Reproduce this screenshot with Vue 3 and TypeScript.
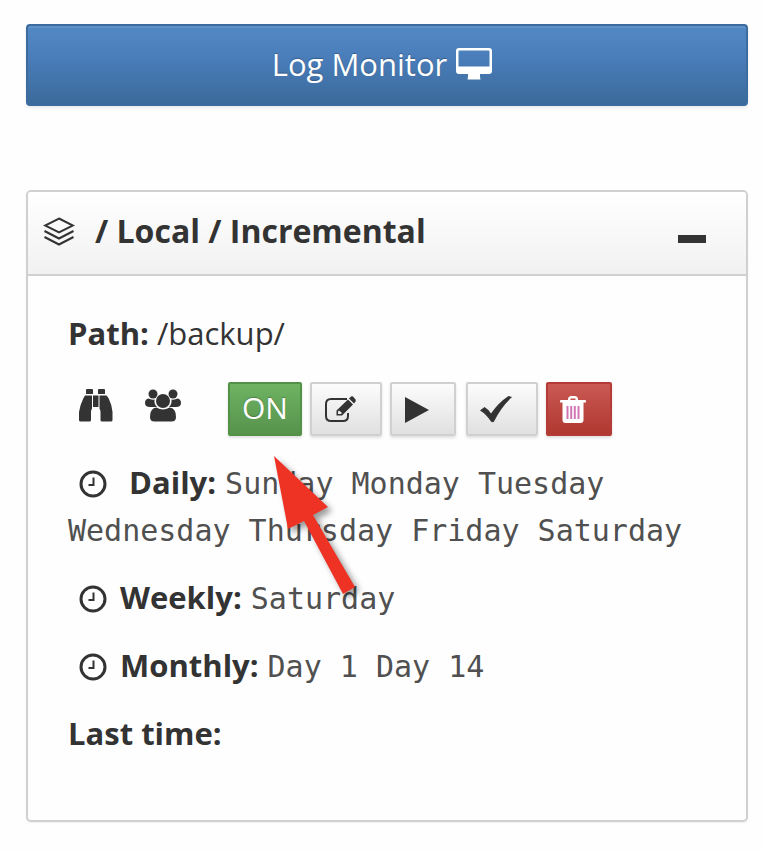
<script setup lang="ts">
interface Schedule {
  label: string
  entries: string[]
  pointed?: boolean
}

const schedules: Schedule[] = [
  {
    label: 'Daily:',
    entries: ['Sunday', 'Monday', 'Tuesday', 'Wednesday', 'Thursday', 'Friday', 'Saturday'],
    pointed: true,
  },
  { label: 'Weekly:', entries: ['Saturday'] },
  { label: 'Monthly:', entries: ['Day 1', 'Day 14'] },
]
</script>

<template>
  <main class="page">
    <button type="button" class="log-button">
      <span>Log Monitor</span>
      <svg class="monitor" viewBox="0 0 36 32" aria-hidden="true">
        <path fill-rule="evenodd" d="M3 0H33Q36 0 36 3V23Q36 26 33 26H24V28Q24 29 24.500 31.500H11.500Q12 29 12 28V26H3Q0 26 0 23V3Q0 0 3 0ZM3.500 2.500Q2.500 2.500 2.500 3.500V18.500H33.500V3.500Q33.500 2.500 32.500 2.500Z" />
      </svg>
    </button>

    <section class="card">
      <header class="card-head">
        <svg class="layers" viewBox="0 0 32 30" aria-hidden="true">
          <path d="M16 1.500 30 8.500 16 15.500 2 8.500Z" />
          <path d="M1.500 14 16 21.500 30.500 14M1.500 20 16 27.500 30.500 20" />
        </svg>
        <h2>/ Local / Incremental</h2>
        <button type="button" class="collapse" aria-label="Collapse">
          <span></span>
        </button>
      </header>

      <div class="card-body">
        <p><strong>Path:</strong> /backup/</p>

        <div class="actions">
          <a href="#" class="glyph" aria-label="Browse">
            <svg class="binoculars" viewBox="0 0 34 33" aria-hidden="true">
              <path d="M8 0H13Q14 0 14 1V5H7V1Q7 0 8 0ZM20 0H25Q26 0 26 1V5H19V1Q19 0 20 0ZM6 6.500H13V19.500Q12 21 12 23V31Q12 32.500 10.500 32.500H1.500Q0 32.500 0 31V23Q1 16 4.500 9ZM14 6.500H19.500V18H14ZM20.500 6.500H27.500L29.500 9Q33 16 33.500 23V31Q33.500 32.500 32 32.500H23Q21.500 32.500 21.500 31V23Q21.500 21 20.500 19.500Z" />
            </svg>
          </a>
          <a href="#" class="glyph users-link" aria-label="Users">
            <svg class="users" viewBox="0 0 36 33" aria-hidden="true">
              <circle cx="8" cy="5" r="4.500" />
              <circle cx="28" cy="5" r="4.500" />
              <path d="M3.500 9.500Q6 11 9.500 10.500Q9 15 12 18H5Q0 18 0 14Q0 10 3.500 9.500ZM32.500 9.500Q30 11 26.500 10.500Q27 15 24 18H31Q36 18 36 14Q36 10 32.500 9.500Z" />
              <circle cx="18" cy="12" r="7" />
              <path d="M11.500 18.500Q18 22.500 24.500 18.500Q31 19 31 28Q31 32.500 26.500 32.500H9.500Q5 32.500 5 28Q5 19 11.500 18.500Z" />
            </svg>
          </a>

          <div class="buttons">
            <button type="button" class="btn on">ON</button>
            <button type="button" class="btn wide" aria-label="Edit">
              <svg class="edit" viewBox="0 0 32 28" aria-hidden="true">
                <path class="frame" d="M23 3H7Q2 3 2 8V20Q2 25 7 25H19Q24 25 24 20V17" />
                <path d="M24 3.500 29 8.500 18 19.500H12.500V14.500ZM15 14.500 14 15.500V18H17L18 17Z" fill-rule="evenodd" />
                <path d="M25 2.500 27 .5Q28 0 29 .5L31.500 3.500Q32 4.500 31.500 5.500L30 7.500Z" />
              </svg>
            </button>
            <button type="button" class="btn" aria-label="Run">
              <svg class="play" viewBox="0 0 24 26" aria-hidden="true"><path d="M0 0 24 13 0 26Z" /></svg>
            </button>
            <button type="button" class="btn wide check-btn" aria-label="Check">
              <svg class="check" viewBox="0 0 32 28" aria-hidden="true">
                <path d="M0 14.500 4.500 11Q8 13 11 17.500Q18 7 28.500 0L32 1Q21 11 14 25.500Q12.500 27 11 25.500Q6 18 0 14.500Z" />
              </svg>
            </button>
            <button type="button" class="btn danger" aria-label="Delete">
              <svg class="trash" viewBox="0 0 26 28" aria-hidden="true">
                <path fill-rule="evenodd" d="M8 4V2.500Q8.500 0 11 0H15Q17.500 0 18 2.500V4H25Q26 4 26 5V6.500H23.500V24Q23.500 27 20.500 27H5.500Q2.500 27 2.500 24V6.500H0V5Q0 4 1 4ZM10.500 4H15.500V2.500H10.500Z" />
                <path class="slots" d="M7.500 10V23M11.200 10V23M14.800 10V23M18.500 10V23" />
              </svg>
            </button>
          </div>
        </div>

        <div v-for="item in schedules" :key="item.label" class="schedule" :class="{ pointed: item.pointed }">
          <svg class="clock" viewBox="0 0 28 28" aria-hidden="true">
            <circle cx="14" cy="14" r="12" />
            <path d="M14.500 7.500V15H9.500" />
          </svg>
          <strong>{{ item.label }}</strong>
          <span class="entries">{{ item.entries.join(' ') }}</span>
          <svg v-if="item.pointed" class="pointer" viewBox="0 0 96 150" aria-hidden="true">
            <path d="M2 1 56 52 41 60 83 132 71 139 32 66 16 74Z" />
          </svg>
        </div>

        <p><strong>Last time:</strong></p>
      </div>
    </section>
  </main>
</template>

<style>
body {
  background: #fefefe;
}
</style>

<style scoped>
.page {
  padding: 24px 16px 28px 26px;
  color: #333;
  font-family: "Open Sans", "Noto Sans", sans-serif;
  font-size: 31px;
  line-height: 47px;
}

svg {
  display: block;
  flex: none;
  fill: currentColor;
}

button {
  margin: 0;
  font: inherit;
  cursor: pointer;
}

.log-button {
  display: flex;
  align-items: center;
  justify-content: center;
  gap: 9px;
  width: 100%;
  height: 82px;
  padding: 0 10px 2px 0;
  border: 2px solid #3b6b9f;
  border-radius: 4px;
  color: #fff;
  background: linear-gradient(#5289c5, #4b7fbc 35%, #3b6a9b);
  box-shadow: inset 0 2px 0 #6094c9, 0 2px 3px rgba(0, 0, 0, 0.08);
  text-shadow: 0 -1px 1px rgba(0, 0, 0, 0.25);
}

.monitor {
  width: 36px;
  height: 32px;
}

.card {
  margin-top: 84px;
  border: 2px solid #d0d0d0;
  border-radius: 5px;
  background: #fefefe;
  box-shadow: 0 1px 2px rgba(0, 0, 0, 0.06);
}

.card-head {
  display: flex;
  box-sizing: border-box;
  align-items: center;
  height: 84px;
  padding: 0 40px 2px 15px;
  border-bottom: 2px solid #d0d0d0;
  border-radius: 3px 3px 0 0;
  background: linear-gradient(#fff, #f1f1f1);
}

.layers {
  width: 32px;
  height: 30px;
  fill: none;
  stroke: currentColor;
  stroke-width: 2;
}

h2 {
  flex: 1;
  margin: 0 0 0 20px;
  padding-bottom: 4px;
  font-size: 32px;
}

.collapse {
  width: 28px;
  padding: 22px 0 8px;
  border: 0;
  background: none;
}

.collapse span {
  display: block;
  height: 8px;
  background: #333;
}

.card-body {
  display: flex;
  flex-direction: column;
  gap: 21px;
  padding: 34px 38px 63px 40px;
}

p {
  margin: 0;
}

.actions {
  display: flex;
  align-items: center;
  padding: 4px 0 2px 11px;
}

.glyph {
  padding-bottom: 8px;
  color: #333;
}

.binoculars {
  width: 34px;
  height: 33px;
}

.users-link {
  margin-left: 32px;
}

.users {
  width: 36px;
  height: 33px;
}

.buttons {
  display: flex;
  gap: 8px;
  margin-left: 47px;
}

.btn {
  display: flex;
  align-items: center;
  justify-content: center;
  width: 66px;
  height: 54px;
  padding: 2px 12px 0 0;
  border: 2px solid #d0d0d0;
  border-radius: 2px;
  color: #333;
  background: linear-gradient(#fcfcfc, #e0e0e0);
  box-shadow: 0 2px 3px rgba(0, 0, 0, 0.12);
}

.wide {
  width: 72px;
}

.check-btn {
  margin-left: 2px;
}

.on {
  width: 74px;
  padding: 0 0 4px;
  border-color: #539148;
  color: #fff;
  font-size: 30px;
  background: linear-gradient(#6fb363, #56934b);
  text-shadow: 0 -1px 1px rgba(0, 0, 0, 0.25);
}

.danger {
  border-color: #b53b36;
  color: #fff;
  background: linear-gradient(#ca5954, #b03831);
}

.edit {
  width: 32px;
  height: 28px;
}

.frame {
  fill: none;
  stroke: currentColor;
  stroke-width: 2;
}

.play {
  width: 24px;
  height: 26px;
}

.check {
  width: 32px;
  height: 28px;
}

.trash {
  width: 26px;
  height: 28px;
}

.slots {
  fill: none;
  stroke: #d276b4;
  stroke-width: 2;
}

.schedule {
  position: relative;
}

.clock {
  display: inline-block;
  width: 28px;
  height: 28px;
  margin: 0 13px 0 11px;
  vertical-align: -4px;
  fill: none;
  stroke: currentColor;
  stroke-width: 3;
}

.clock path {
  stroke-width: 2;
}

.pointed .clock {
  margin-right: 22px;
}

.entries {
  margin-left: 9px;
  color: #505050;
  font-family: "DejaVu Sans Mono", "Liberation Mono", monospace;
  font-size: 30px;
  line-height: 1;
}

.pointer {
  position: absolute;
  top: -4px;
  left: 204px;
  width: 96px;
  height: 150px;
  z-index: 1;
  fill: #ee3224;
  filter: drop-shadow(4px 4px 3px rgba(0, 0, 0, 0.4));
  pointer-events: none;
}
</style>
